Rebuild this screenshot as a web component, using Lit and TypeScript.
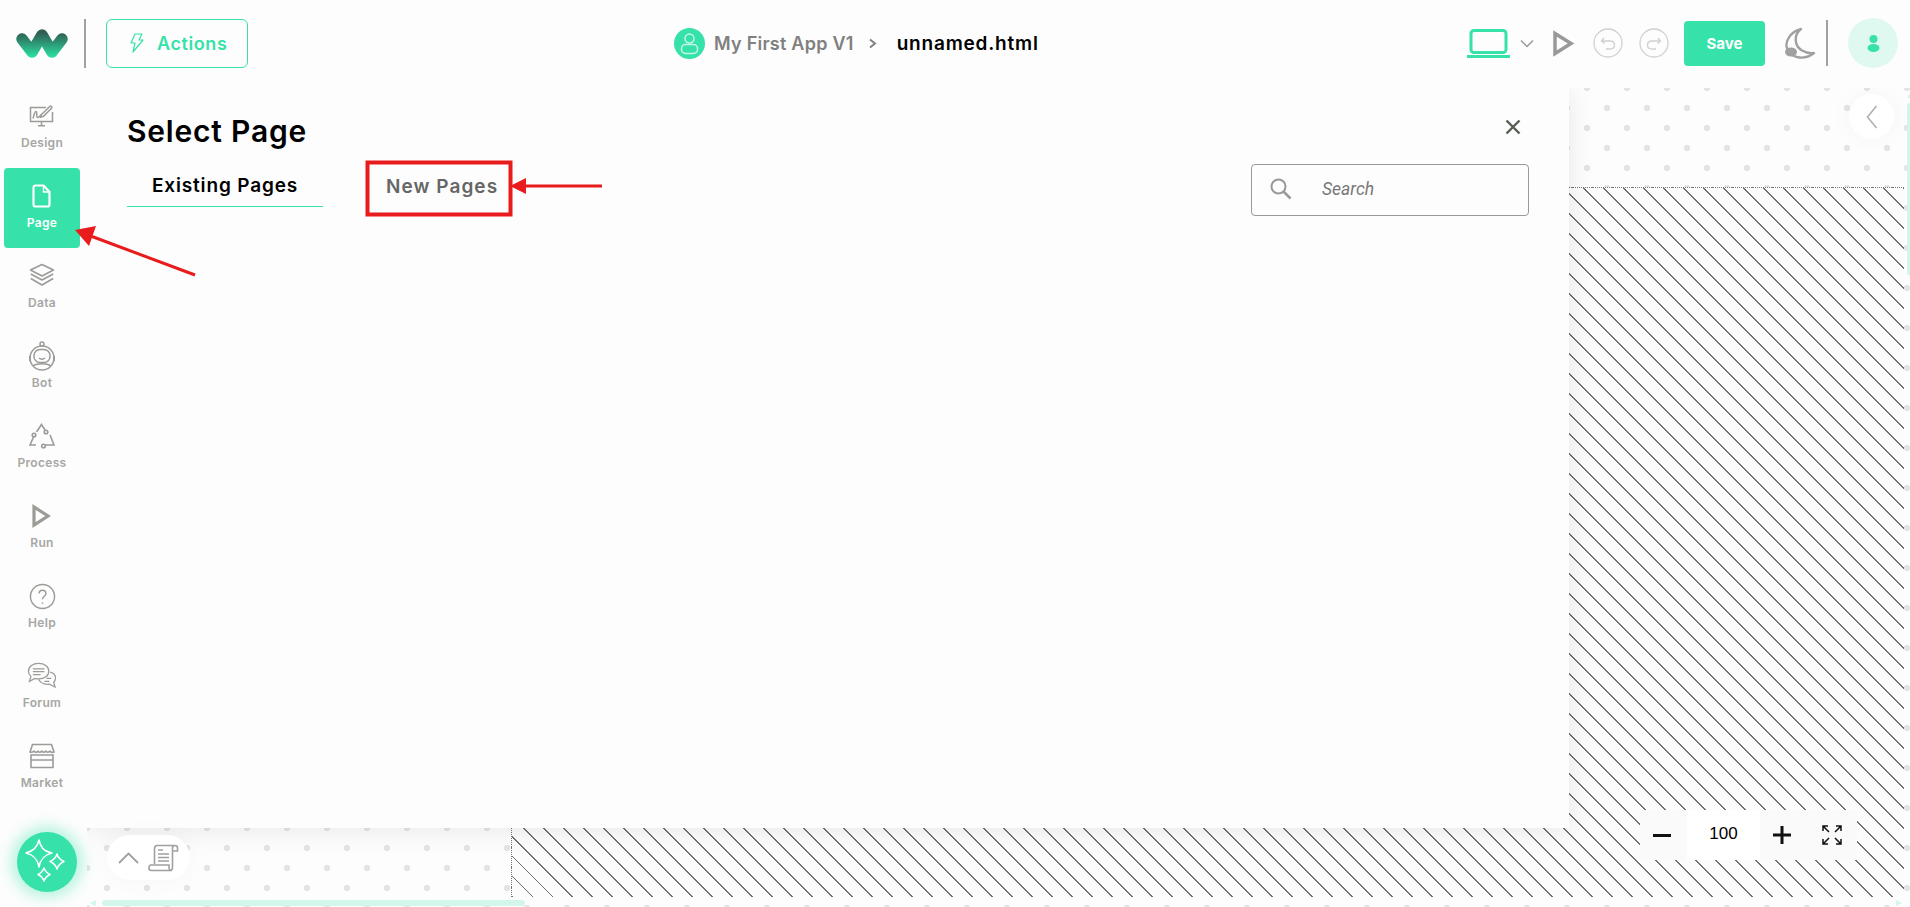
import { LitElement, html, css, svg } from "lit";
import { customElement } from "lit/decorators.js";

const ICONS: Record<string, unknown> = {
  design: svg`<svg class="ico" viewBox="0 0 26 24" width="26" height="24" fill="none" stroke="#9b9b98" stroke-width="1.500"><path d="M17 3.500H1.500v14h22V8"/><path d="M4 14.500c1-3 1.500-7 3-7s0 6 1.500 6 2.500-2 4-3"/><path d="M12.500 10.500 21 2.200c.6-.6 2.500 1 1.800 1.800l-8.300 8.400-2.800.8z"/><path d="M12.500 17.500v3.500M9 21.800h7"/></svg>`,
  page: svg`<svg class="ico" viewBox="0 0 20 24" width="20" height="24" fill="none" stroke="#fff" stroke-width="2.200" stroke-linejoin="round"><path d="M3 1.500h8.500l6 6.500v12.500a2 2 0 0 1-2 2h-12a2 2 0 0 1-2-2v-17a2 2 0 0 1 2-2z"/><path d="M11.500 1.500V8h6" stroke-width="1.400"/></svg>`,
  data: svg`<svg class="ico" viewBox="0 0 26 26" width="26" height="26" fill="none" stroke="#9b9b98" stroke-width="1.600" stroke-linejoin="round"><path d="M13 1.500 24.500 7 13 13 1.500 7z"/><path d="M1.800 11 13 17l11.200-6"/><path d="M1.800 15.500 13 22l11.200-6.500"/></svg>`,
  bot: svg`<svg class="ico" viewBox="0 0 26 30" width="26" height="30" fill="none" stroke="#9b9b98" stroke-width="1.500"><circle cx="13" cy="3" r="2"/><circle cx="13" cy="17" r="12"/><rect x="5" y="8.500" width="16" height="13" rx="6"/><path d="M9.500 14.500h.1M16.500 14.500h.1" stroke-width="2"/><path d="M10 17c1.500 1.500 4.500 1.500 6 0"/><path d="M4 25c4-3 14-3 18 0"/><path d="M1 15v5M25 15v5" stroke-width="2"/></svg>`,
  process: svg`<svg class="ico" viewBox="0 0 26 26" width="26" height="26" fill="none" stroke="#9b9b98" stroke-width="1.600"><path d="M7.500 9 12.500 1.500l3.500 5.500"/><circle cx="17" cy="9" r="1.800"/><path d="M5 13 1 22h6"/><circle cx="5" cy="12" r="1.800"/><path d="M21 12l4 10h-9"/><circle cx="14.500" cy="23" r="1.800"/></svg>`,
  run: svg`<svg class="ico" viewBox="0 0 20 24" width="20" height="24" fill="none" stroke="#9b9b98" stroke-width="3.200"><path d="M2 3v18l14-9z"/></svg>`,
  help: svg`<svg class="ico" viewBox="0 0 28 28" width="27" height="27" fill="none" stroke="#9b9b98" stroke-width="1.500"><circle cx="14" cy="14" r="12.500"/><path d="M10.500 11c0-2 1.500-3.500 3.500-3.500s3.500 1.500 3.500 3.300c0 3-3.500 3-3.500 6"/><path d="M14 20v1.500"/></svg>`,
  forum: svg`<svg class="ico" viewBox="0 0 32 30" width="31" height="29" fill="none" stroke="#9b9b98" stroke-width="1.300"><path d="M12 1.500c6 0 10.500 3 10.500 8s-4.500 8-10.500 8c-1.500 0-3-.2-4-.6L2.500 20l1.500-5C2.300 13.500 1.500 11.500 1.500 9.500c0-5 4.500-8 10.500-8z"/><path d="M6 7h12M6 10h12M6 13h8"/><path d="M24 10.500c3.500 1 5.500 3 5.500 6 0 2-1 3.500-2 4.500l1.500 5-6-3c-4 .5-9-1-11-5"/><path d="M20 17h5M18 20h5"/></svg>`,
  market: svg`<svg class="ico" viewBox="0 0 26 26" width="26" height="26" fill="none" stroke="#9b9b98" stroke-width="1.600"><path d="M3.500 1.500h19L25 9c-2.500 1-3 0-4-.8-1.500 1.300-3 1.300-4 0-1.500 1.300-3 1.300-4 0-1.500 1.300-3 1.300-4 0-1 1.300-3 1.300-4 0-1 .8-2 1.500-4 .8z"/><path d="M2 12h22v12.500H2zM2 17h22"/></svg>`,
};

const NAV = [
  { key: "design", label: "Design" },
  { key: "page", label: "Page", active: true },
  { key: "data", label: "Data" },
  { key: "bot", label: "Bot" },
  { key: "process", label: "Process" },
  { key: "run", label: "Run" },
  { key: "help", label: "Help" },
  { key: "forum", label: "Forum" },
  { key: "market", label: "Market" },
];

@customElement("app-root")
export class AppRoot extends LitElement {
  static styles = css`
    :host {
      display: block;
      width: 1910px;
      height: 907px;
      overflow: hidden;
      position: relative;
      background: #fdfdfd;
      font-family: Inter, "Noto Sans", sans-serif;
      --green: #36e2a9;
    }
    .top {
      height: 88px;
      box-sizing: border-box;
      padding-bottom: 2px;
      display: grid;
      grid-template-columns: 674px auto 1fr;
      align-items: center;
      background: #fdfdfd;
      position: relative;
      z-index: 2;
    }
    .left, .center, .right { display: flex; align-items: center; }
    .left { padding-left: 16px; }
    .vline { width: 2px; background: #a0a0a0; }
    .left .vline { height: 49px; margin: 0 20px 0 16px; }
    .actions {
      box-sizing: border-box;
      width: 142px;
      height: 49px;
      border: 1px solid var(--green);
      border-radius: 6px;
      display: flex;
      align-items: center;
      gap: 13px;
      padding-left: 23px;
      color: var(--green);
      font-size: 18px;
      font-weight: 600;
      letter-spacing: 0.6px;
    }
    .center { gap: 9px; font-size: 18px; font-weight: 600; }
    .app { color: #808080; letter-spacing: 0.25px; }
    .sep { margin: 0 11px 0 5px; }
    .file { color: #000; font-size: 19px; letter-spacing: 0.8px; }
    .right { justify-content: flex-end; padding-right: 12px; }
    .laptop-arrow { margin: 0 19px 0 10px; }
    .play { margin-right: 18px; }
    .undo { margin-right: 16px; }
    .save {
      width: 81px;
      height: 45px;
      border-radius: 4px;
      background: var(--green);
      color: #fff;
      font-size: 15px;
      font-weight: 700;
      display: flex;
      align-items: center;
      justify-content: center;
      margin: 0 20px 0 15px;
    }
    .right .vline { height: 46px; margin: 0 20px 0 10px; }
    .user {
      width: 50px;
      height: 50px;
      border-radius: 50%;
      background: #e0f9f0;
      display: flex;
      align-items: center;
      justify-content: center;
    }
    .main { display: flex; height: 819px; }
    .side { width: 87px; flex: none; background: #fdfdfd; padding-left: 4px; box-sizing: border-box; position: relative; z-index: 2; }
    .item {
      width: 76px;
      height: 80px;
      box-sizing: border-box;
      padding-bottom: 6px;
      display: flex;
      flex-direction: column;
      align-items: center;
      justify-content: center;
      gap: 3px;
      font-size: 12px;
      font-weight: 600;
      letter-spacing: 0.3px;
      color: #a6a6a3;
      border-radius: 4px;
    }
    .ico { display: block; }
    .item .box { height: 31px; display: flex; align-items: center; justify-content: center; }
    .item.active { background: var(--green); color: #fff; }
    .canvas {
      flex: 1;
      box-sizing: border-box;
      padding: 99px 6px 10px 424px;
      position: relative;
      background-color: #fdfdfd;
      background-image:
        radial-gradient(circle at 20px 20px, #e4e4e4 2.9px, transparent 3.4px),
        radial-gradient(circle at 20px 20px, #e4e4e4 2.9px, transparent 3.4px);
      background-size: 40px 40px;
      background-position: 0 -20px, -20px 0;
    }
    .hatch {
      height: 100%;
      box-sizing: border-box;
      border-top: 1px dotted #777;
      border-left: 1px dotted #777;
      background: #fdfdfd repeating-linear-gradient(45deg, #6f6f6f 0, #6f6f6f 0.8px, #fcfcfc 0.8px, #fcfcfc 14.142px);
    }
    .modal {
      position: absolute;
      left: 0;
      top: 0;
      width: 1482px;
      height: 740px;
      box-sizing: border-box;
      background: #fdfdfd;
      box-shadow: 0 2px 26px rgba(0, 0, 0, 0.09);
      padding: 22px 40px 0 40px;
    }
    .head { display: flex; justify-content: space-between; align-items: center; height: 43px; }
    .close { margin: -10px 8px 0 0; }
    h1 { margin: 0; font-size: 30px; font-weight: 600; color: #000; letter-spacing: 0.8px; line-height: 43px; }
    .tools { display: flex; justify-content: space-between; align-items: flex-start; margin-top: 12px; }
    .tabs { display: flex; }
    .tab {
      height: 42px;
      display: flex;
      align-items: center;
      justify-content: center;
      font-size: 19px;
      font-weight: 600;
      letter-spacing: 0.85px;
      box-sizing: border-box;
    }
    .tab.on { width: 196px; color: #000; border-bottom: 1px solid var(--green); }
    .tab.off { margin-left: 63px; color: #666; letter-spacing: 1.05px; }
    .search {
      width: 278px;
      height: 52px;
      box-sizing: border-box;
      border: 1px solid #999;
      border-radius: 4px;
      display: flex;
      align-items: center;
      padding: 0 0 2px 18px;
      gap: 30px;
      margin-top: -1px;
      font-family: Roboto, sans-serif;
      font-style: italic;
      font-size: 17.500px;
      color: #777;
    }
    .pill {
      position: absolute;
      left: 20px;
      top: 747px;
      width: 83px;
      height: 45px;
      border-radius: 23px;
      background: #fff;
      box-shadow: 0 0 24px rgba(0, 0, 0, 0.03);
      display: flex;
      align-items: center;
      justify-content: center;
      gap: 9px;
    }
    .collapse {
      position: absolute;
      right: 16px;
      top: 6px;
      width: 45px;
      height: 45px;
      border-radius: 50%;
      background: #fff;
      box-shadow: 0 0 24px rgba(0, 0, 0, 0.04);
      display: flex;
      align-items: center;
      justify-content: center;
    }
    .zoom {
      position: absolute;
      left: 1553px;
      top: 722px;
      width: 217px;
      height: 50px;
      background: #fafafa;
      display: flex;
      align-items: center;
    }
    .zoom .z { flex: none; width: 44px; display: flex; justify-content: center; }
    .zoom .z.minus { margin-right: 3px; }
    .zoom .z.full { width: 53px; box-sizing: border-box; justify-content: flex-end; padding-right: 15px; }
    .zoom .val {
      flex: none;
      width: 73px;
      height: 50px;
      box-sizing: border-box;
      padding-bottom: 3px;
      background: #fff;
      display: flex;
      align-items: center;
      justify-content: center;
      font-family: "Liberation Sans", sans-serif;
      font-size: 17px;
      color: #000;
    }
    .hbar {
      position: absolute;
      left: 15px;
      bottom: 1px;
      width: 423px;
      height: 6px;
      border-radius: 3px;
      background: #d3f6ea;
    }
    .harrow {
      position: absolute;
      left: 3px;
      bottom: 1px;
      border-right: 6px solid #d3f6ea;
      border-top: 3px solid transparent;
      border-bottom: 3px solid transparent;
    }
    .harrow.end {
      left: 1809px;
      border-right: 0;
      border-left: 6px solid #d3f6ea;
    }
    .varrow {
      position: absolute;
      right: 0;
      top: 5px;
      border-bottom: 5px solid #d3f6ea;
      border-left: 3px solid transparent;
      border-right: 0;
    }
    .vbar {
      position: absolute;
      right: 0;
      top: 15px;
      width: 3px;
      height: 172px;
      background: #d3f6ea;
      border-radius: 2px 0 0 2px;
    }
    .spark {
      position: absolute;
      left: 17px;
      top: 832px;
      width: 60px;
      height: 60px;
      border-radius: 50%;
      background: var(--green);
      box-shadow: 0 0 14px 6px rgba(54, 226, 169, 0.35);
      display: flex;
      align-items: center;
      justify-content: center;
      z-index: 3;
    }
    .marks { position: absolute; left: 0; top: 0; z-index: 4; pointer-events: none; }
  `;

  render() {
    return html`
      <div class="top">
        <div class="left">
          <svg width="52" height="32" viewBox="0 0 52 32">
            <defs>
              <linearGradient id="lg" gradientUnits="userSpaceOnUse" x1="0" y1="6" x2="0" y2="30">
                <stop offset="0" stop-color="#2f5f55" />
                <stop offset="1" stop-color="#2be0a0" />
              </linearGradient>
            </defs>
            <path d="M6 12 16 25 26 8 36 25 46 12" fill="none" stroke="url(#lg)" stroke-width="11.500" stroke-linecap="round" stroke-linejoin="round" />
          </svg>
          <div class="vline"></div>
          <div class="actions">
            <svg width="14" height="20" viewBox="0 0 14 20" fill="none" stroke="#36e2a9" stroke-width="1.200" stroke-linejoin="round"><path d="M5 1h7L9 7h4L3 19l2-9H1z" /></svg>
            <span>Actions</span>
          </div>
        </div>
        <div class="center">
          <svg width="31" height="31" viewBox="0 0 31 31">
            <circle cx="15.500" cy="15.500" r="15.500" fill="#36e2a9" />
            <g fill="none" stroke="#c6f6e5" stroke-width="1.500"><circle cx="15.500" cy="10.500" r="4.500" /><rect x="7.500" y="16.500" width="16" height="9" rx="4" /></g>
          </svg>
          <span class="app">My First App V1</span>
          <svg class="sep" width="9" height="11" viewBox="0 0 9 11" fill="none" stroke="#808080" stroke-width="2"><path d="M2 1.500 7 5.500 2 9.500" /></svg>
          <span class="file">unnamed.html</span>
        </div>
        <div class="right">
          <svg width="43" height="29" viewBox="0 0 43 29" fill="none"><rect x="4" y="1.500" width="35" height="22" rx="3" stroke="#36e2a9" stroke-width="3" /><rect x="0" y="26" width="43" height="3" fill="#36e2a9" /></svg>
          <svg class="laptop-arrow" width="14" height="9" viewBox="0 0 14 9" fill="none" stroke="#999" stroke-width="1.500"><path d="M1 1.500 7 7.500 13 1.500" /></svg>
          <svg class="play" width="22" height="27" viewBox="0 0 22 27" fill="none" stroke="#999" stroke-width="3.500"><path d="M2 3.500v20L18 13.500z" /></svg>
          <svg class="undo" width="30" height="30" viewBox="0 0 30 30" fill="none" stroke="#d0d0d0" stroke-width="1.300"><circle cx="15" cy="15" r="14" /><path d="M11 10 8.500 13l3 2.500M9 13h8c3 0 4.500 2 4.500 4s-1.500 4-4.500 4h-4" /></svg>
          <svg width="30" height="30" viewBox="0 0 30 30" fill="none" stroke="#d0d0d0" stroke-width="1.300"><circle cx="15" cy="15" r="14" /><path d="M19 10l2.500 3-3 2.500M21 13h-8c-3 0-4.500 2-4.500 4s1.500 4 4.500 4h4" /></svg>
          <div class="save">Save</div>
          <svg width="31" height="32" viewBox="0 0 31 32"><path d="M16 2C4 5 0 16 2 21c3 10 17 13 27 5-9 1-17-4-18-11-1-6 1-10 5-13z" fill="none" stroke="#a0a0a0" stroke-width="2.400" stroke-linejoin="round" /><ellipse cx="6" cy="25" rx="6" ry="4.500" fill="#a0a0a0" /></svg>
          <div class="vline"></div>
          <div class="user">
            <svg width="13" height="17" viewBox="0 0 13 17" fill="#36e2a9"><circle cx="6.500" cy="4" r="4" /><ellipse cx="6.500" cy="13" rx="6" ry="4" /></svg>
          </div>
        </div>
      </div>
      <div class="main">
        <nav class="side">
          ${NAV.map(
            (n) => html`<div class="item ${n.active ? "active" : ""}">
              <div class="box">${ICONS[n.key]}</div>
              <span>${n.label}</span>
            </div>`
          )}
        </nav>
        <div class="canvas">
          <div class="hatch"></div>
          <div class="modal">
            <div class="head">
              <h1>Select Page</h1>
              <svg class="close" width="16" height="16" viewBox="0 0 16 16" stroke="#555d52" stroke-width="2.400"><path d="M1.500 1.500 14.500 14.500M14.500 1.500 1.500 14.500" /></svg>
            </div>
            <div class="tools">
              <div class="tabs">
                <div class="tab on">Existing Pages</div>
                <div class="tab off">New Pages</div>
              </div>
              <div class="search">
                <svg width="22" height="22" viewBox="0 0 22 22" fill="none" stroke="#999" stroke-width="2"><circle cx="8.500" cy="8.500" r="7" /><path d="M13.500 13.500 20.500 20.500" stroke-width="2.500" /></svg>
                <span>Search</span>
              </div>
            </div>
          </div>
          <div class="pill">
            <svg width="21" height="12" viewBox="0 0 21 12" fill="none" stroke="#a0a0a0" stroke-width="1.800"><path d="M1 11 10.500 1.500 20 11" /></svg>
            <svg width="31" height="28" viewBox="0 0 31 28" fill="none" stroke="#a0a0a0" stroke-width="1.600"><path d="M27 1.500H9C7 1.500 6.500 3 6.500 5v15M3 21h18v3c0 2 2 2.500 3 1.500.5-.5.5-1 .5-2V4c0-1.500 1-2.500 2.500-2.500s2.500 1 2.500 2.500v3h-5" /><path d="M3 21c-1.500 0-2 1.500-2 3s1 2.500 2.500 2.500H24" /><path d="M10 6h5M10 10h11M10 13.500h11M10 17h11" /></svg>
          </div>
          <div class="collapse">
            <svg width="12" height="24" viewBox="0 0 12 24" fill="none" stroke="#b0b0b0" stroke-width="1.600"><path d="M10.500 1 1.500 12 10.500 23" /></svg>
          </div>
          <div class="zoom">
            <div class="z minus"><svg width="18" height="3"><rect width="18" height="3" fill="#111" /></svg></div>
            <div class="val">100</div>
            <div class="z"><svg width="18" height="18"><path d="M0 9h18M9 0v18" stroke="#111" stroke-width="3" /></svg></div>
            <div class="z full"><svg width="20" height="20" viewBox="0 0 20 20" fill="none" stroke="#111" stroke-width="1.500"><path d="M1 6V1h5M1 1l6 6M19 6V1h-5M19 1l-6 6M1 14v5h5M1 19l6-6M19 14v5h-5M19 19l-6-6" /></svg></div>
          </div>
          <div class="harrow"></div>
          <div class="hbar"></div>
          <div class="harrow end"></div>
          <div class="varrow"></div>
          <div class="vbar"></div>
        </div>
      </div>
      <div class="spark">
        <svg width="44" height="46" viewBox="0 0 44 46" fill="none" stroke="#fff" stroke-width="1.500" stroke-linejoin="round">
          <path d="M14 1c1.500 7 4 11 13 13-8 2-11.500 6-13 14-1.500-8-5-12-13-14 8-2 11.500-6 13-13z" />
          <path d="M32 15c1 3.500 2.500 5.500 7 7.500-4.500 2-6 4-7 7.500-1-3.500-2.500-5.500-7-7.500 4.500-2 6-4 7-7.500z" />
          <path d="M19 29c1 3 2 4.500 6 6.500-4 2-5 3.500-6 6.500-1-3-2-4.500-6-6.500 4-2 5-3.500 6-6.500z" />
        </svg>
      </div>
      <svg class="marks" width="1910" height="907">
        <rect x="367.500" y="162.500" width="143" height="52" fill="none" stroke="#e81c1c" stroke-width="4" />
        <path d="M195 275 92 236.500" stroke="#e81c1c" stroke-width="3" fill="none" />
        <path d="M75 230 96 226 89 246z" fill="#e81c1c" />
        <path d="M602 186H525" stroke="#e81c1c" stroke-width="3" fill="none" />
        <path d="M510 186 526 178V194z" fill="#e81c1c" />
      </svg>
    `;
  }
}
